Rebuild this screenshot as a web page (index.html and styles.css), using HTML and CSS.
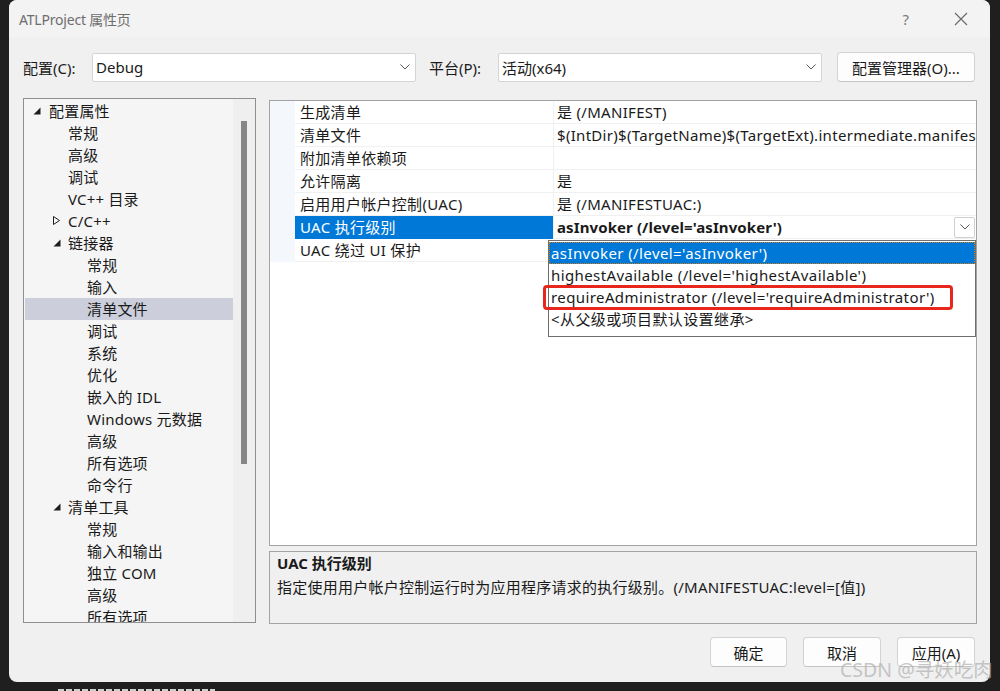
FILE: index.html
```html
<!DOCTYPE html>
<html lang="zh-CN">
<head>
<meta charset="utf-8">
<title>ATLProject 属性页</title>
<link rel="stylesheet" href="styles.css">
</head>
<body>
<div class="screen">
  <div class="window">
    <div class="titlebar">
      <span class="title">ATLProject 属性页</span>
      <span class="help">?</span>
      <span class="close"><svg width="14" height="14" viewBox="0 0 14 14"><path d="M1 1L13 13M13 1L1 13" stroke="#6b6b6b" stroke-width="1.2" fill="none"/></svg></span>
    </div>

    <div class="config-row">
      <span class="cfg-label">配置(C):</span>
      <div class="combo"><span>Debug</span><svg class="chev" width="10" height="6" viewBox="0 0 10 6"><path d="M0.5 0.5L5 5L9.5 0.5" stroke="#555" stroke-width="1" fill="none"/></svg></div>
      <span class="cfg-label second">平台(P):</span>
      <div class="combo"><span>活动(x64)</span><svg class="chev" width="10" height="6" viewBox="0 0 10 6"><path d="M0.5 0.5L5 5L9.5 0.5" stroke="#555" stroke-width="1" fill="none"/></svg></div>
      <button class="btn mgr">配置管理器(O)...</button>
    </div>

    <div class="main">
      <div class="tree">
        <div class="tree-list">
          <div class="node l1"><span class="tw tw1"><svg width="8" height="8" viewBox="0 0 8 8"><polygon points="7.5,0.5 7.5,7.5 0.5,7.5" fill="#1e1e1e"/></svg></span>配置属性</div>
          <div class="node leaf2">常规</div>
          <div class="node leaf2">高级</div>
          <div class="node leaf2">调试</div>
          <div class="node leaf2">VC++ 目录</div>
          <div class="node l2"><span class="tw tw2"><svg width="8" height="10" viewBox="0 0 8 10"><polygon points="0.5,0.5 6.5,4.5 0.5,8.5" fill="none" stroke="#1e1e1e" stroke-width="1"/></svg></span>C/C++</div>
          <div class="node l2"><span class="tw tw2"><svg width="8" height="8" viewBox="0 0 8 8"><polygon points="7.5,0.5 7.5,7.5 0.5,7.5" fill="#1e1e1e"/></svg></span>链接器</div>
          <div class="node leaf3">常规</div>
          <div class="node leaf3">输入</div>
          <div class="node leaf3 selected">清单文件</div>
          <div class="node leaf3">调试</div>
          <div class="node leaf3">系统</div>
          <div class="node leaf3">优化</div>
          <div class="node leaf3">嵌入的 IDL</div>
          <div class="node leaf3">Windows 元数据</div>
          <div class="node leaf3">高级</div>
          <div class="node leaf3">所有选项</div>
          <div class="node leaf3">命令行</div>
          <div class="node l2"><span class="tw tw2"><svg width="8" height="8" viewBox="0 0 8 8"><polygon points="7.5,0.5 7.5,7.5 0.5,7.5" fill="#1e1e1e"/></svg></span>清单工具</div>
          <div class="node leaf3">常规</div>
          <div class="node leaf3">输入和输出</div>
          <div class="node leaf3">独立 COM</div>
          <div class="node leaf3">高级</div>
          <div class="node leaf3">所有选项</div>
        </div>
        <div class="scrollbar"><div class="thumb"></div></div>
      </div>

      <div class="right">
        <div class="grid">
          <div class="rows">
            <div class="m"></div><div class="name">生成清单</div><div class="val">是 (/MANIFEST)</div>
            <div class="m"></div><div class="name">清单文件</div><div class="val">$(IntDir)$(TargetName)$(TargetExt).intermediate.manifest</div>
            <div class="m"></div><div class="name">附加清单依赖项</div><div class="val"></div>
            <div class="m"></div><div class="name">允许隔离</div><div class="val">是</div>
            <div class="m"></div><div class="name">启用用户帐户控制(UAC)</div><div class="val">是 (/MANIFESTUAC:)</div>
            <div class="m"></div><div class="name sel">UAC 执行级别</div><div class="val bold"><span class="vtext">asInvoker (/level='asInvoker')</span><span class="ddbtn"><svg width="10" height="6" viewBox="0 0 10 6"><path d="M0.5 0.5L5 5L9.5 0.5" stroke="#555" stroke-width="1" fill="none"/></svg></span></div>
            <div class="m"></div><div class="name">UAC 绕过 UI 保护</div><div class="val"></div>
          </div>
          <div class="dropdown">
            <div class="opt active">asInvoker (/level='asInvoker')</div>
            <div class="opt">highestAvailable (/level='highestAvailable')</div>
            <div class="opt">requireAdministrator (/level='requireAdministrator')</div>
            <div class="opt">&lt;从父级或项目默认设置继承&gt;</div>
          </div>
        </div>
        <div class="desc">
          <div class="desc-title">UAC 执行级别</div>
          <div class="desc-text">指定使用用户帐户控制运行时为应用程序请求的执行级别。(/MANIFESTUAC:level=[值])</div>
        </div>
      </div>
    </div>

    <div class="buttons">
      <button class="btn ok">确定</button>
      <button class="btn cancel">取消</button>
      <button class="btn apply">应用(A)</button>
    </div>
  </div>
  <div class="dashes"></div>
  <div class="redbox"></div>
  <div class="watermark">CSDN @寻妖吃肉</div>
</div>
</body>
</html>
```

FILE: styles.css
```css
* { box-sizing: border-box; }
html, body { margin: 0; padding: 0; }
body {
  background: #1f1f1f;
  font-family: "Noto Sans", "Noto Sans CJK SC", sans-serif;
  font-size: 15px;
  letter-spacing: 0.3px;
  color: #1a1a1a;
}
.screen {
  position: relative;
  width: 1000px;
  height: 691px;
  overflow: hidden;
  background: #1f1f1f;
}
.window {
  margin-left: 9px;
  width: 981px;
  height: 682px;
  background: #f0f0f0;
  border-radius: 8px;
  overflow: hidden;
  display: flex;
  flex-direction: column;
}
.titlebar {
  height: 37px;
  background: #f3f3f3;
  display: flex;
  align-items: center;
  padding-left: 10px;
  flex-shrink: 0;
}
.title {
  font-size: 14px;
  color: #6e6e6e;
  letter-spacing: -0.2px;
  flex: 1;
}
.help {
  color: #7a7a7a;
  font-size: 15px;
  width: 20px;
  text-align: center;
  margin-right: 38px;
}
.close {
  width: 14px;
  height: 14px;
  margin-right: 22px;
  display: flex;
}
.config-row {
  margin-top: 15px;
  height: 30px;
  display: flex;
  align-items: center;
  padding-left: 14px;
  flex-shrink: 0;
  letter-spacing: 0;
}
.cfg-label {
  width: 69px;
  white-space: nowrap;
}
.cfg-label.second { margin-left: 13px; }
.combo {
  width: 324px;
  height: 29px;
  background: #fff;
  border: 1px solid #d4d4d4;
  border-radius: 2px;
  display: flex;
  align-items: center;
  padding-left: 3px;
  padding-right: 5px;
}
.combo span { flex: 1; }
.btn {
  font-family: inherit;
  font-size: 15px;
  letter-spacing: 0;
  color: #1a1a1a;
  background: #fdfdfd;
  border: 1px solid #d3d3d3;
  border-bottom-color: #c4c4c4;
  border-radius: 4px;
  padding: 0;
  height: 30px;
}
.mgr { width: 138px; margin-left: 15px; }
.main {
  margin-top: 16px;
  padding-left: 14px;
  display: flex;
  gap: 13px;
  height: 526px;
  flex-shrink: 0;
}
.tree {
  width: 233px;
  height: 525px;
  border: 1px solid #8f8f8f;
  background: #f5f5f5;
  display: flex;
  overflow: hidden;
}
.tree-list {
  flex: 1;
  padding-top: 1px;
  padding-left: 1px;
  overflow: hidden;
  letter-spacing: 0.2px;
}
.node {
  height: 22px;
  line-height: 22px;
  display: flex;
  align-items: center;
  white-space: nowrap;
  color: #1a1a1a;
}
.node.l1 { padding-left: 8px; }
.node.l2 { padding-left: 28px; }
.node.leaf2 { padding-left: 43px; }
.node.leaf3 { padding-left: 62px; }
.node.selected { background: #cccedb; }
.tw { display: flex; align-items: center; }
.tw1 { width: 16px; }
.tw2 { width: 15px; }
.scrollbar {
  width: 22px;
  background: #efefef;
  padding-left: 8px;
  padding-top: 22px;
}
.thumb {
  width: 6px;
  height: 343px;
  background: #868686;
}
.right {
  width: 708px;
  display: flex;
  flex-direction: column;
}
.grid {
  position: relative;
  margin-top: 2px;
  height: 447px;
  border: 1px solid #a3a3a3;
  background: #fff;
  overflow: hidden;
}
.rows {
  display: grid;
  grid-template-columns: 25px 258px 1fr;
  grid-auto-rows: 23px;
}
.m { background: #f4f7fb; }
.name, .val {
  line-height: 22px;
  border-bottom: 1px solid #f0f0f0;
  white-space: nowrap;
  overflow: hidden;
}
.name { padding-left: 5px; }
.name.sel { background: #0078d7; color: #fff; border-bottom-color: #0078d7; }
.val { padding-left: 3px; border-left: 1px solid #f0f0f0; }
.val.bold { font-weight: bold; display: flex; align-items: center; letter-spacing: 0.1px; }
.vtext { flex: 1; }
.ddbtn {
  width: 21px;
  height: 21px;
  margin-right: 1px;
  border: 1px solid #d0d0d0;
  border-radius: 2px;
  background: #fff;
  display: flex;
  align-items: center;
  justify-content: center;
}
.dropdown {
  position: absolute;
  left: 278px;
  top: 139px;
  width: 428px;
  height: 97px;
  background: #fff;
  border: 1px solid #6e6e6e;
  padding-top: 1px;
}
.opt {
  height: 22px;
  line-height: 22px;
  padding-left: 2px;
  white-space: nowrap;
  letter-spacing: 0.4px;
}
.opt.active {
  background: #0078d7;
  color: #fff;
  outline: 1px dotted #d07a1a;
  outline-offset: -1px;
}
.desc {
  margin-top: 5px;
  height: 73px;
  border: 1px solid #a3a3a3;
  background: #f0f0f0;
  padding-left: 7px;
}
.desc-title {
  font-weight: bold;
  line-height: 22px;
  font-size: 15px;
  letter-spacing: 0;
}
.desc-text {
  margin-top: 2px;
  line-height: 22px;
  font-size: 15px;
  letter-spacing: 0.25px;
}
.buttons {
  margin-top: 13px;
  display: flex;
  justify-content: flex-end;
  gap: 16px;
  padding-right: 15px;
  flex-shrink: 0;
}
.ok { width: 77px; }
.cancel { width: 78px; }
.apply { width: 78px; }
.dashes {
  margin-left: 58px;
  margin-top: 7px;
  width: 157px;
  height: 2px;
  background: repeating-linear-gradient(90deg, #cfcfcf 0 6px, #1f1f1f 6px 8px);
}
.redbox {
  position: absolute;
  left: 543px;
  top: 285px;
  width: 410px;
  height: 25px;
  border: 3px solid #e8261c;
  border-radius: 4px;
}
.watermark {
  position: absolute;
  left: 840px;
  top: 654px;
  font-size: 19.5px;
  letter-spacing: 0;
  color: rgba(175, 175, 175, 0.7);
  white-space: nowrap;
}
```
